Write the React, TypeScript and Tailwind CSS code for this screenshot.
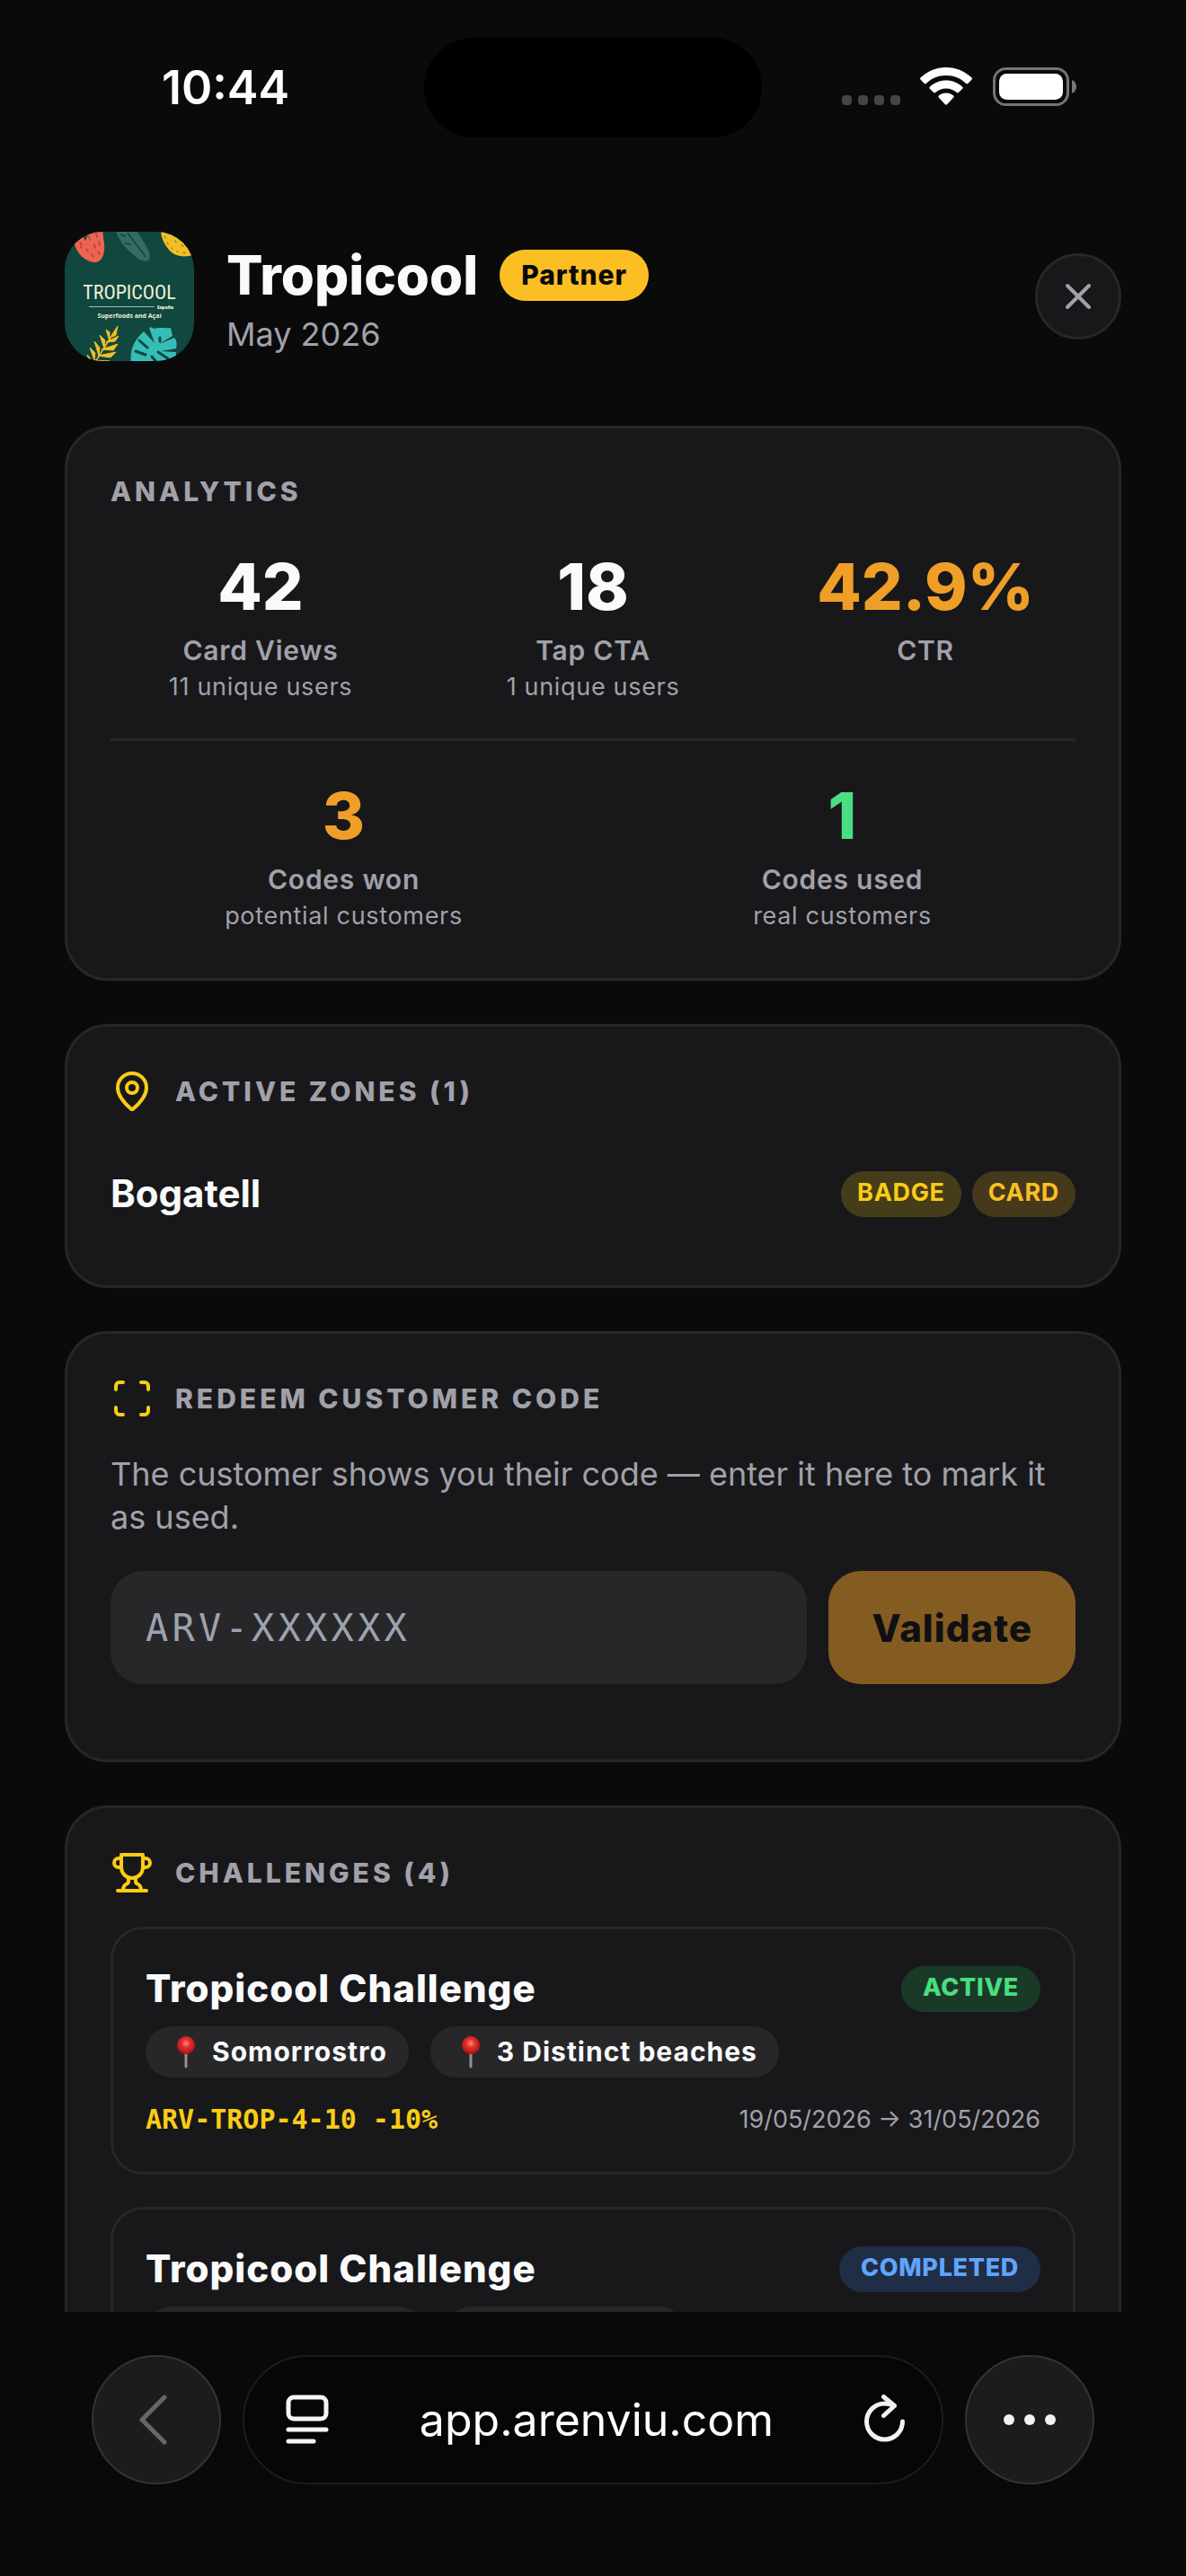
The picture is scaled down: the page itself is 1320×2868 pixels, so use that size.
import type { ReactNode } from "react";
import { MapPin, Scan, X } from "lucide-react";

type Stat = { value: string; label: string; hint?: string; color: string };

type Challenge = {
  id: number;
  name: string;
  status: string;
  tone: string;
  places?: string[];
  code?: string;
  dates?: string;
};

const reachStats: Stat[] = [
  { value: "42", label: "Card Views", hint: "11 unique users", color: "text-[#fafafa]" },
  { value: "18", label: "Tap CTA", hint: "1 unique users", color: "text-[#fafafa]" },
  { value: "42.9%", label: "CTR", color: "text-[#ef9f27]" },
];

const codeStats: Stat[] = [
  { value: "3", label: "Codes won", hint: "potential customers", color: "text-[#ef9f27]" },
  { value: "1", label: "Codes used", hint: "real customers", color: "text-[#4ade80]" },
];

const challenges: Challenge[] = [
  {
    id: 1,
    name: "Tropicool Challenge",
    status: "ACTIVE",
    tone: "bg-[#22c55e]/20 text-[#4ade80]",
    places: ["Somorrostro", "3 Distinct beaches"],
    code: "ARV-TROP-4-10 -10%",
    dates: "19/05/2026 → 31/05/2026",
  },
  {
    id: 2,
    name: "Tropicool Challenge",
    status: "COMPLETED",
    tone: "bg-[#3b82f6]/20 text-[#60a5fa]",
  },
];

function StatusBar() {
  return (
    <div className="relative flex h-[186px] shrink-0 items-start justify-between pl-[180px] pr-[122px]">
      <span className="mt-[66px] text-[52px] leading-[64px] font-semibold text-white">10:44</span>
      <div className="absolute top-[42px] left-1/2 h-[111px] w-[376px] -translate-x-1/2 rounded-full bg-black" />
      <svg className="mt-[74px]" width="262" height="45" viewBox="0 0 262 45" aria-hidden="true">
        <g fill="#454545">
          <rect x="1" y="32" width="11" height="11" rx="4" />
          <rect x="19" y="32" width="11" height="11" rx="4" />
          <rect x="37" y="32" width="11" height="11" rx="4" />
          <rect x="55" y="32" width="11" height="11" rx="4" />
        </g>
        <g fill="#ffffff">
          <path d="M117 1c11 0 21 4.300 28.500 11.500.6.600.6 1.500 0 2.100l-4.200 4.300c-.6.600-1.500.6-2.100 0C133.200 13.200 125.500 10 117 10s-16.200 3.200-22.200 8.900c-.6.600-1.500.6-2.100 0l-4.200-4.300c-.6-.6-.6-1.500 0-2.100C96 5.300 106 1 117 1z" />
          <path d="M117 15.500c7 0 13.400 2.700 18.200 7.200.6.600.6 1.500 0 2.100l-4.300 4.300c-.6.600-1.400.6-2 0-3.200-2.900-7.300-4.600-11.900-4.600s-8.700 1.700-11.900 4.600c-.6.600-1.400.6-2 0l-4.300-4.300c-.6-.6-.6-1.500 0-2.100 4.800-4.500 11.200-7.200 18.200-7.200z" />
          <path d="M117 29.500c3.200 0 6 1.200 8.200 3.100.6.600.6 1.400.1 2l-7.200 7.700c-.6.600-1.600.6-2.200 0l-7.200-7.700c-.5-.6-.5-1.400.1-2 2.200-1.900 5-3.100 8.200-3.100z" />
        </g>
        <rect x="170.500" y="2.500" width="82" height="40" rx="13" fill="none" stroke="#757575" strokeWidth="3" />
        <rect x="176" y="8" width="71" height="29" rx="8.500" fill="#ffffff" />
        <path d="M257 15c3.500 1.500 5 4.300 5 7.500s-1.500 6-5 7.500z" fill="#757575" />
      </svg>
    </div>
  );
}

function BrandLogo() {
  return (
    <svg className="size-36 shrink-0 rounded-[42px]" viewBox="0 0 144 144" role="img" aria-label="Tropicool">
      <rect width="144" height="144" fill="#10473e" />
      {/* fruit along the top edge */}
      <path d="M10 10C12 22 20 32 32 34c10 1 13-10 12-21L42-2H16z" fill="#ee6352" />
      <path d="M14-2h17l-5 5-3 7-3-5-6 1z" fill="#10473e" />
      <path d="M17 12l2 3M27 5l1 4M35 2l1 4M24 19l2 3M33 14l1 4M18 17l1 1M38 11l1 4M30 25l2 3M37 22l2 3" stroke="#a94338" strokeWidth="1.500" strokeLinecap="round" />
      <path d="M57 0c4 10 10 18 19 25 6 6 12 9 17 7 4-4 0-13-4-19-4-7-8-11-9-15z" fill="#376a60" />
      <path d="M70 1l20 27M62 3l6 2M67 13l7 1" stroke="#10473e" strokeWidth="1.500" fill="none" />
      <path d="M107 0c1 10 7 20 15 25 6 3 14 3 21 1-1-8-6-15-13-18-7-4-10-9-17-9z" fill="#f2bf26" />
      <path d="M111 5l1 2M114 12l1 2M119 18l1 1M125 22h1M132 23l2 1M130 15l2 1M123 10l1 2" stroke="#b78514" strokeWidth="1.500" strokeLinecap="round" />
      <g fill="#f2f0d9" fontFamily="'Open Sans', sans-serif">
        <text x="72" y="75" textAnchor="middle" fontSize="22" fontFamily="'Liberation Sans Narrow', 'Roboto Condensed', 'Open Sans Condensed', sans-serif">
          TROPICOOL
        </text>
        <text x="103" y="86" fontSize="5" fontWeight="800">España</text>
        <text x="72" y="96" textAnchor="middle" fontSize="7" fontWeight="700">Superfoods and Açaí</text>
      </g>
      <path d="M27 83.500h73" stroke="#9dbfae" strokeWidth="1" />
      {/* palm sprig */}
      <path d="M58 107L34 145" stroke="#f2bf26" strokeWidth="1.500" />
      <path d="M59 105l-6 12 4-2zM46 109l4 13 0-10zM60 116l-14 7 10-1zM39 115l5 15 1-9zM59 125l-18 6 13 1zM33 122l5 16 1-9zM57 134l-20 4 14 2zM28 129l5 14 1-8zM25 137l3 8 3-1zM50 144l-18-1 4 2z" fill="#f2bf26" stroke="#f2bf26" strokeWidth="1" strokeLinejoin="round" />
      {/* monstera leaf */}
      <path d="M74 146c-2-14 3-25 14-35l12 13-6-17c3-1 4 0 5 1 7-2 12 0 19-1l2 9-15 9 17-7c3 3 3 8 2 12l-17 3 17 1c0 6-1 9-4 12z" fill="#37bdb8" />
      <path d="M83 121l9 8M79 133l11 4M104 134l12 8M97 139l5 6M106 118v4" stroke="#10473e" strokeWidth="3" strokeLinecap="round" />
    </svg>
  );
}

function TrophyIcon() {
  return (
    <svg className="size-12" viewBox="0 0 24 24" fill="none" stroke="currentColor" strokeWidth="2" strokeLinecap="round" strokeLinejoin="round" aria-hidden="true">
      <path d="M6 9H4.500a2.500 2.500 0 0 1 0-5H6" />
      <path d="M18 9h1.500a2.500 2.500 0 0 0 0-5H18" />
      <path d="M4 22h16" />
      <path d="M10 14.660V17c0 .55-.47.98-.97 1.210C7.850 18.750 7 20.240 7 22" />
      <path d="M14 14.660V17c0 .55.47.98.97 1.210C16.150 18.750 17 20.240 17 22" />
      <path d="M18 2H6v7a6 6 0 0 0 12 0V2Z" />
    </svg>
  );
}

function PinEmoji() {
  return (
    <svg className="h-9 w-[42px]" viewBox="0 0 42 36" aria-hidden="true">
      <defs>
        <radialGradient id="pinHead" cx="0.5" cy="0.4" r="0.6">
          <stop offset="0" stopColor="#ff8a7e" />
          <stop offset="0.4" stopColor="#e5302c" />
          <stop offset="1" stopColor="#a80f14" />
        </radialGradient>
      </defs>
      <path d="M19.500 17h3v17l-1.500 2-1.500-2z" fill="#a08c86" />
      <circle cx="21" cy="10" r="10" fill="url(#pinHead)" />
    </svg>
  );
}

function Card({ children }: { children: ReactNode }) {
  return <section className="rounded-[48px] border-[3px] border-[#27272a] bg-[#18181b] p-12">{children}</section>;
}

function CardTitle({ icon, children }: { icon: ReactNode; children: ReactNode }) {
  return (
    <div className="mb-9 flex h-12 items-center gap-6 text-[#facc15]">
      {icon}
      <h2 className="text-[30px] leading-[45px] font-extrabold tracking-[4px] text-[#a1a1aa]">{children}</h2>
    </div>
  );
}

function StatCell({ value, label, hint, color }: Stat) {
  return (
    <div className="flex-1 text-center">
      <p className={`text-[72px] leading-[75px] font-extrabold ${color}`}>{value}</p>
      <p className="mt-3 text-[30px] leading-[45px] font-semibold tracking-wide text-[#a1a1aa]">{label}</p>
      {hint && <p className="text-[27px] leading-[36px] tracking-wide text-[#a1a1aa]">{hint}</p>}
    </div>
  );
}

function Tag({ tone, children }: { tone: string; children: ReactNode }) {
  return (
    <span className={`h-[51px] rounded-full text-[27px] leading-[48px] tracking-wide ${tone}`}>{children}</span>
  );
}

function BrowserBar() {
  return (
    <footer className="flex h-[294px] shrink-0 items-start gap-6 bg-[#090909] px-[102px] pt-12">
      <button type="button" aria-label="Back" className="flex size-36 items-center justify-center rounded-full border-2 border-[#333333] bg-[#1c1c1c]">
        <svg width="40" height="56" viewBox="0 0 40 56" fill="none" stroke="#666666" strokeWidth="5" strokeLinecap="round" strokeLinejoin="round" aria-hidden="true">
          <path d="M29 3L4 28l25 25" />
        </svg>
      </button>
      <div className="flex h-36 flex-1 items-center justify-between rounded-full border-2 border-[#1c1c1c] bg-[#060606] pr-10 pl-[46px]">
        <button type="button" aria-label="Page menu">
          <svg width="48" height="56" viewBox="0 0 48 56" fill="none" stroke="#f5f5f5" strokeWidth="5" strokeLinecap="round" aria-hidden="true">
            <rect x="3" y="3" width="42" height="24" rx="6" />
            <path d="M3 39h42M3 52h28" />
          </svg>
        </button>
        <span className="text-[50px] leading-[64px] text-white">app.arenviu.com</span>
        <button type="button" aria-label="Reload">
          <svg width="46" height="56" viewBox="0 0 46 56" fill="none" stroke="#f2f2f2" strokeWidth="5" strokeLinecap="round" strokeLinejoin="round" aria-hidden="true">
            <path d="M42.500 30A20 20 0 1 1 22.500 10c4 0 7 .7 10 2" />
            <path d="M21.500 2.500l12 10-12 11" />
          </svg>
        </button>
      </div>
      <button type="button" aria-label="More" className="flex size-36 items-center justify-center rounded-full border-2 border-[#333333] bg-[#1c1c1c]">
        <svg width="58" height="12" viewBox="0 0 58 12" fill="#f2f2f2" aria-hidden="true">
          <circle cx="6" cy="6" r="6" />
          <circle cx="29" cy="6" r="6" />
          <circle cx="52" cy="6" r="6" />
        </svg>
      </button>
    </footer>
  );
}

export default function App() {
  return (
    <div className="flex h-screen flex-col bg-[#0a0a0a] font-['Inter',sans-serif] text-[#fafafa]">
      <StatusBar />

      <main className="flex flex-1 flex-col gap-12 overflow-hidden px-[72px] pt-[72px]">
        {/* Partner header */}
        <header className="mb-6 flex items-center gap-9">
          <BrandLogo />
          <div className="flex-1">
            <div className="flex items-center gap-6">
              <h1 className="text-[60px] leading-[84px] font-extrabold">Tropicool</h1>
              <span className="h-[57px] rounded-full bg-[#fbbf24] px-6 text-[30px] leading-[57px] font-extrabold tracking-[1px] text-[#0a0a0a]">Partner</span>
            </div>
            <p className="text-[36px] leading-[48px] text-[#a1a1aa]">May 2026</p>
          </div>
          <button type="button" aria-label="Close" className="flex size-24 items-center justify-center rounded-full border-[3px] border-[#27272a] bg-[#18181b] text-[#a1a1aa]">
            <X size={48} />
          </button>
        </header>

        <Card>
          <h2 className="mb-[45px] text-[30px] leading-[45px] font-extrabold tracking-[4px] text-[#a1a1aa]">ANALYTICS</h2>
          <div className="flex gap-9 border-b-[3px] border-[#27272a] pb-[39px]">
            {reachStats.map((stat) => (
              <StatCell key={stat.label} {...stat} />
            ))}
          </div>
          <div className="flex gap-9 pt-[45px] pb-[3px]">
            {codeStats.map((stat) => (
              <StatCell key={stat.label} {...stat} />
            ))}
          </div>
        </Card>

        <Card>
          <CardTitle icon={<MapPin size={48} />}>ACTIVE ZONES (1)</CardTitle>
          <div className="flex items-center justify-between py-6">
            <p className="text-[42px] leading-[60px] font-bold">Bogatell</p>
            <div className="flex gap-3">
              <Tag tone="bg-[#facc15]/20 px-[18px] font-bold text-[#facc15]">BADGE</Tag>
              <Tag tone="bg-[#fbbf24]/20 px-[18px] font-bold text-[#fbbf24]">CARD</Tag>
            </div>
          </div>
        </Card>

        <Card>
          <CardTitle icon={<Scan size={48} />}>REDEEM CUSTOMER CODE</CardTitle>
          <label htmlFor="code" className="block text-[36px] leading-[48px] text-[#a1a1aa]">
            The customer shows you their code — enter it here to mark it as used.
          </label>
          <form className="mt-9 mb-9 flex h-[126px] gap-6">
            <input
              id="code"
              type="text"
              placeholder="ARV-XXXXXX"
              className="min-w-0 flex-1 rounded-[36px] bg-[#27272a] px-[39px] font-['DejaVu_Sans_Mono',monospace] text-[42px] tracking-widest placeholder:text-[#9ca3af]"
            />
            <button type="submit" disabled className="rounded-[36px] bg-[#ef9f27] px-12 text-[42px] font-extrabold tracking-[1px] text-[#0a0a0a] disabled:opacity-50">
              Validate
            </button>
          </form>
        </Card>

        <Card>
          <CardTitle icon={<TrophyIcon />}>CHALLENGES (4)</CardTitle>
          <div className="flex flex-col gap-9">
            {challenges.map((challenge) => (
              <article key={challenge.id} className="rounded-[36px] border-[3px] border-[#27272a] p-9">
                <div className="flex items-center justify-between">
                  <h3 className="text-[42px] leading-[60px] font-extrabold tracking-[1px]">{challenge.name}</h3>
                  <Tag tone={`px-6 font-extrabold ${challenge.tone}`}>{challenge.status}</Tag>
                </div>
                {challenge.places ? (
                  <div className="mt-3 flex gap-6">
                    {challenge.places.map((place) => (
                      <span key={place} className="flex h-[57px] items-center gap-2 rounded-full bg-[#27272a] px-6 text-[30px] font-bold tracking-[1px]">
                        <PinEmoji />
                        {place}
                      </span>
                    ))}
                  </div>
                ) : (
                  <div className="mt-3 flex gap-6" aria-hidden="true">
                    <span className="h-[57px] w-[310px] rounded-full bg-[#27272a]" />
                    <span className="h-[57px] w-[266px] rounded-full bg-[#27272a]" />
                  </div>
                )}
                {challenge.code && (
                  <div className="mt-6 flex items-center justify-between">
                    <p className="font-['DejaVu_Sans_Mono',monospace] text-[30px] leading-[45px] font-bold text-[#facc15]">{challenge.code}</p>
                    <p className="text-[27px] leading-[45px] text-[#a1a1aa]">{challenge.dates}</p>
                  </div>
                )}
              </article>
            ))}
          </div>
        </Card>
      </main>

      <BrowserBar />
    </div>
  );
}
